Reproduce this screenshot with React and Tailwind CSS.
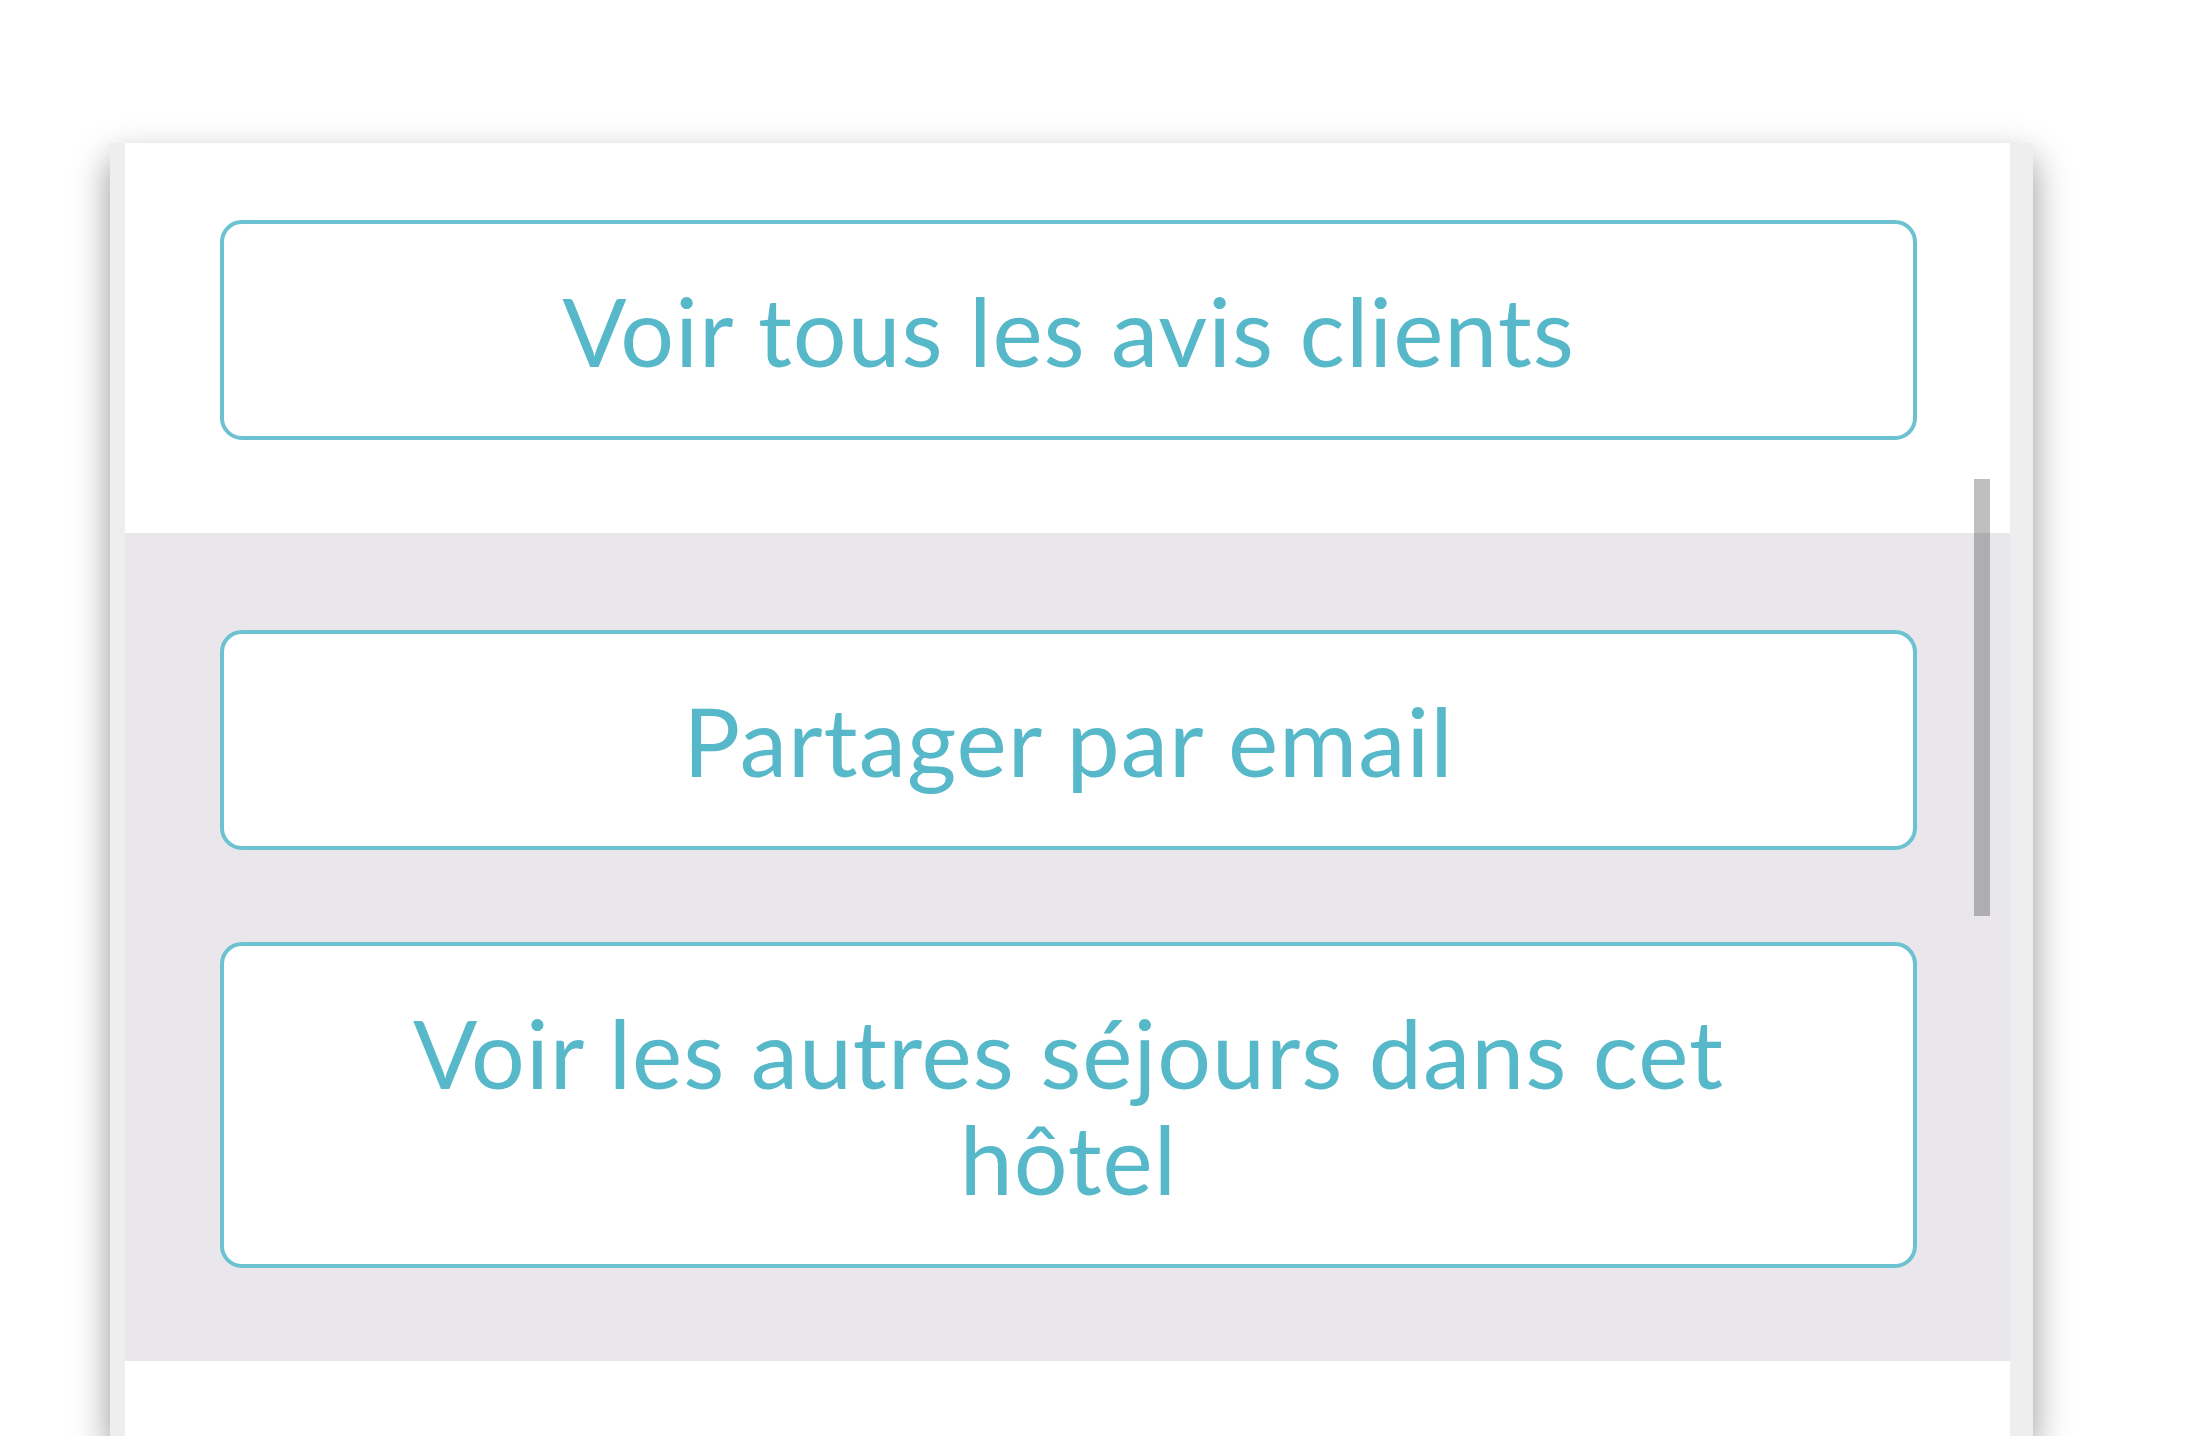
const actions = [
  { label: "Partager par email" },
  { label: "Voir les autres séjours dans cet hôtel" },
];

function OutlineButton({ children }) {
  return (
    <button className="w-full rounded-[22px] border-[4px] border-[#6cc2d0] bg-white px-[90px] py-[53px] text-center text-[95px] leading-[106px] text-[#56b8c8] tracking-[1px]">
      {children}
    </button>
  );
}

export default function App() {
  return (
    <div
      className="min-h-[1436px] h-[1436px] overflow-hidden bg-white pl-[110px] pt-[143px]"
      style={{ fontFamily: "Lato, 'Noto Sans', sans-serif" }}
    >
      <div className="h-[1293px] w-[1923px] bg-[#eeeeee] pl-[15px] pr-[23px] shadow-[0_16px_34px_rgba(0,0,0,0.42)]">
        <div className="relative h-full bg-white">
          <div className="pl-[95px] pr-[93px] pt-[77px] pb-[93px]">
            <OutlineButton>Voir tous les avis clients</OutlineButton>
          </div>
          <div className="flex flex-col gap-[92px] bg-[#e9e7ec] pl-[95px] pr-[93px] pt-[97px] pb-[93px]">
            {actions.map((a) => (
              <OutlineButton key={a.label}>{a.label}</OutlineButton>
            ))}
          </div>
          <div className="absolute left-[1849px] top-[336px] h-[437px] w-[16px] bg-black/25" />
        </div>
      </div>
    </div>
  );
}
